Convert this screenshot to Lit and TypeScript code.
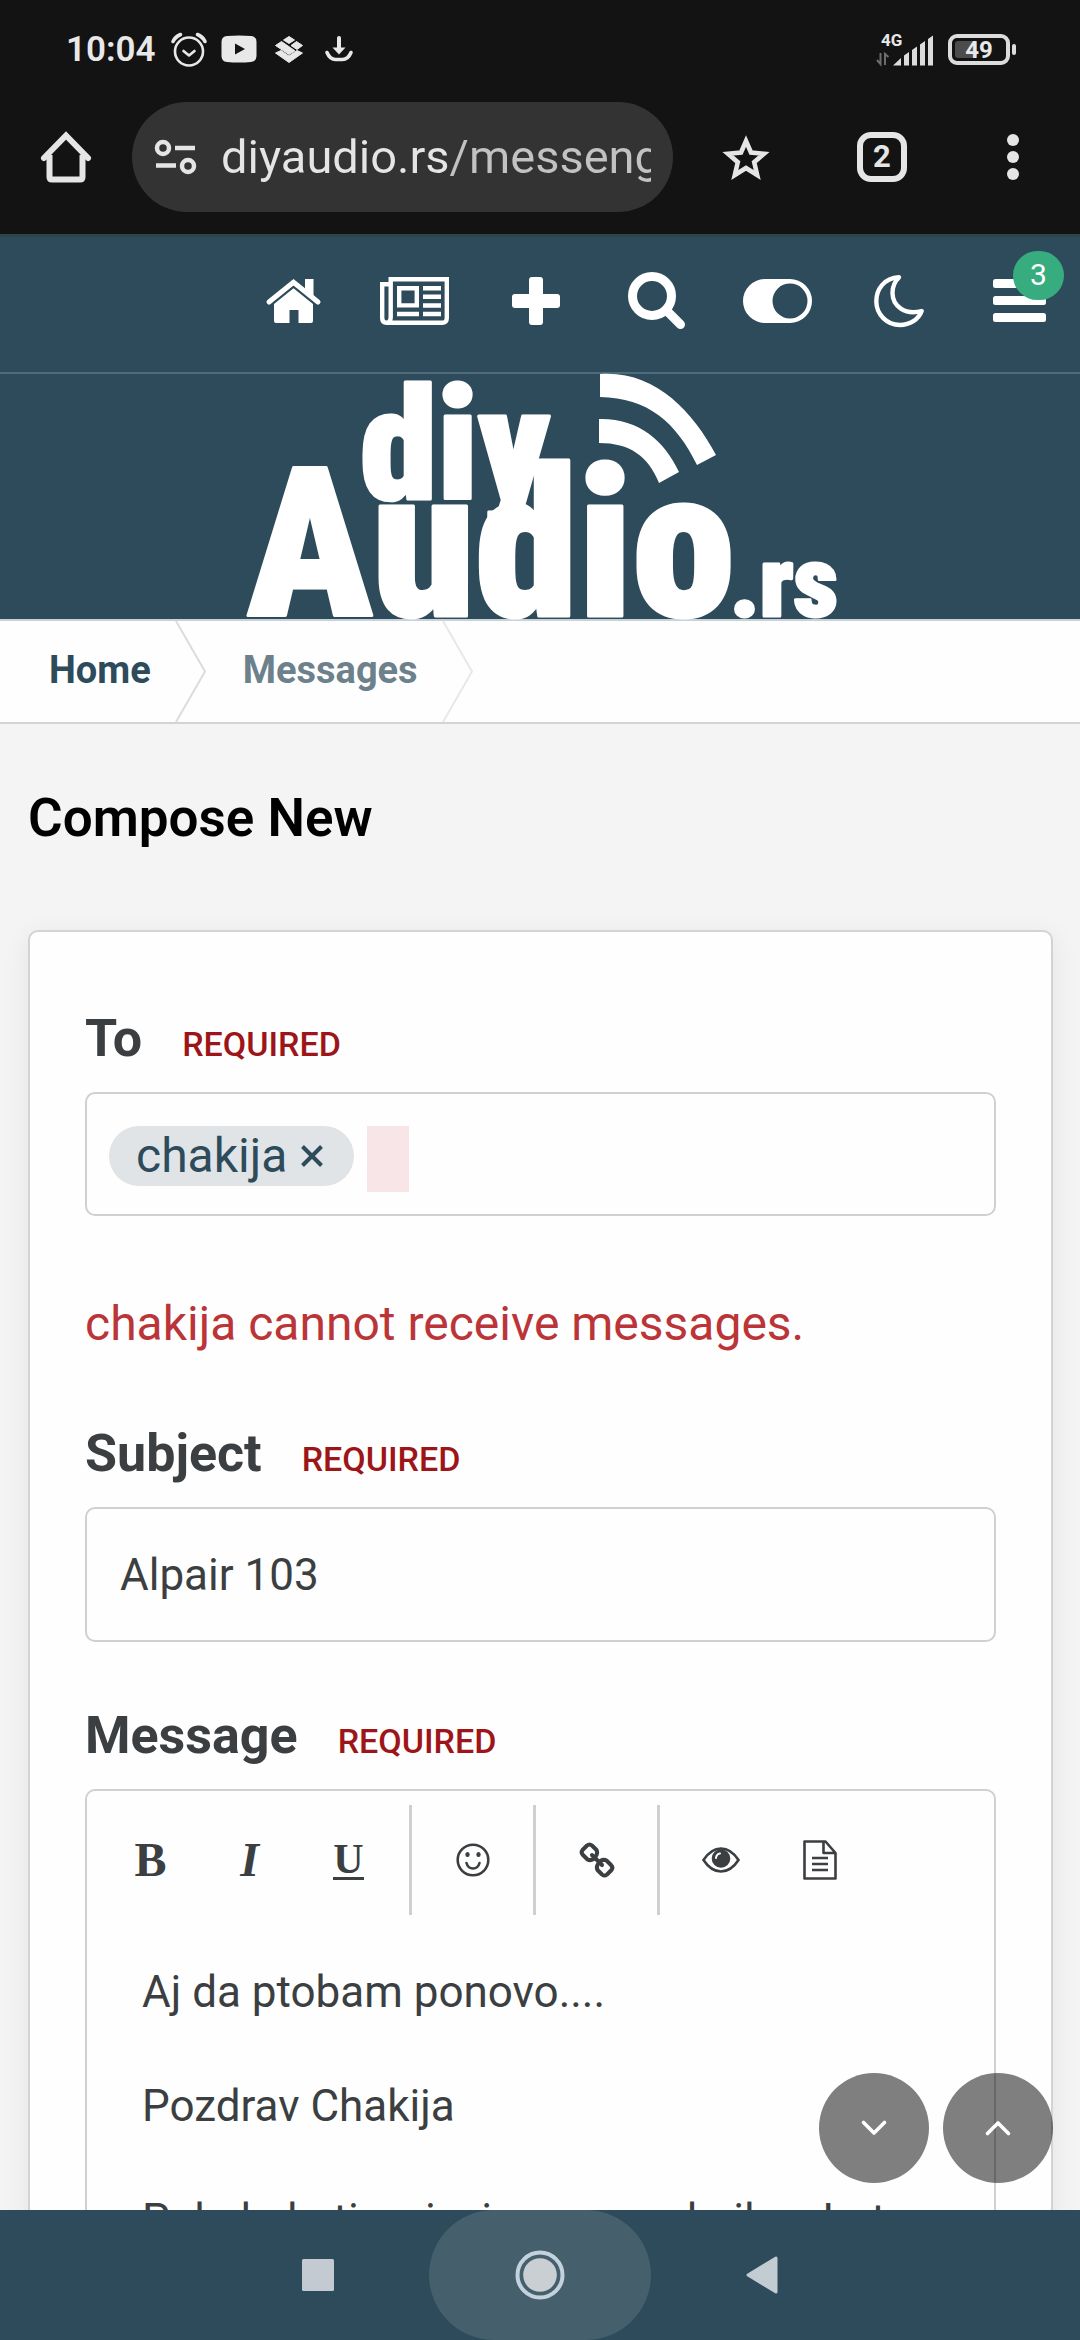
import { LitElement, html, svg, css } from "lit";
import { customElement, state } from "lit/decorators.js";

const reset = css`
  :host {
    display: block;
    font-family: Roboto, "Noto Sans", sans-serif;
  }
  * {
    box-sizing: border-box;
  }
  svg {
    display: block;
    flex: none;
    overflow: visible;
  }
  button {
    display: flex;
    align-items: center;
    justify-content: center;
    flex: none;
    margin: 0;
    padding: 0;
    border: 0;
    background: none;
    color: inherit;
    font: inherit;
  }
`;

/* ---------- Phone status bar ---------- */
@customElement("status-bar")
class StatusBar extends LitElement {
  static styles = [
    reset,
    css`
      .bar {
        display: flex;
        align-items: center;
        justify-content: space-between;
        height: 80px;
        padding: 20px 63px 0 66px;
        color: #e8e8e8;
        background: #131313;
      }
      .side {
        display: flex;
        align-items: center;
        gap: 14px;
      }
      .time {
        padding-right: 1px;
        font-size: 35px;
        font-weight: 600;
        line-height: 40px;
      }
      .net,
      .level {
        font-family: Roboto, sans-serif;
        font-weight: 700;
        fill: #e8e8e8;
      }
      .net {
        font-size: 17px;
      }
      .level {
        font-size: 24px;
      }
    `,
  ];
  render() {
    return html`
      <div class="bar">
        <div class="side">
          <span class="time">10:04</span>
          <svg width="36" height="36" viewBox="0 0 36 36" fill="none" stroke="#e8e8e8" stroke-width="2.6" stroke-linecap="round" stroke-linejoin="round">
            <circle cx="18" cy="19.5" r="14" />
            <path d="M12.5 19 L18 23.5 L23.5 19" />
            <path d="M2 9.5 Q4 5 9.500 2.500 M34 9.500 Q32 5 26.500 2.500" stroke-width="3.600" />
          </svg>
          <svg width="36" height="36" viewBox="0 0 36 36" fill="#e8e8e8">
            <path fill-rule="evenodd" d="M6 4 Q18 3 30 4 Q35.500 4.500 35.500 10 V24 Q35.500 29.500 30 30 Q18 31 6 30 Q.5 29.500 .5 24 V10 Q.5 4.500 6 4Z M14 11.500 V22.500 L24 17Z" />
          </svg>
          <svg width="36" height="36" viewBox="0 0 36 36" fill="#e8e8e8" stroke="#e8e8e8" stroke-width="1" stroke-linejoin="round">
            <path d="M18 4.500 L23.500 8 L18 11.500 L12.500 8Z" />
            <path d="M25.500 9.500 L31.500 13.500 L26 17.500 L20 13.500Z" />
            <path d="M10.500 9.500 L24 18.800 L18 22.500 L4.500 13.500Z" />
            <path d="M4.500 21 L10 18.500 L18 24 L26 18.500 L31.500 21 L18 30.500Z" />
          </svg>
          <svg width="36" height="36" viewBox="0 0 36 36" fill="none" stroke="#e8e8e8" stroke-linecap="round">
            <path d="M18 6 V16" stroke-width="4" />
            <path d="M11.500 15.500 H24.500 L18 22.500Z" fill="#e8e8e8" stroke="none" />
            <path d="M6 20.500 Q9 27.500 14.500 27.500 H21.500 Q27 27.500 30 20.500" stroke-width="3.600" />
          </svg>
        </div>
        <div class="side">
          <svg width="58" height="34" viewBox="0 0 58 34" fill="#dcdcdc">
            <text class="net" x="5" y="13">4G</text>
            <path d="M4.500 20 V31 L1 27 M9 32 V21 L12.500 24" fill="none" stroke="#6d6d6d" stroke-width="2" />
            <path d="M17 32.500 L25 25 V32.500Z M28 22.500 L33 19 V32.500 H28Z M36 17 L41 13.500 V32.500 H36Z M44 11.500 L49 8 V32.500 H44Z M52 6 L57 2.500 V32.500 H52Z" />
          </svg>
          <svg width="69" height="34" viewBox="0 0 69 34">
            <rect x="2" y="3" width="58" height="27" rx="7" fill="none" stroke="#dcdcdc" stroke-width="4" />
            <rect x="7" y="8" width="22" height="17" rx="3" fill="#4c4c4c" />
            <rect x="64" y="11" width="4" height="11" rx="2" fill="#dcdcdc" />
            <text class="level" x="31" y="25" text-anchor="middle">49</text>
          </svg>
        </div>
      </div>
    `;
  }
}

/* ---------- Browser toolbar ---------- */
@customElement("browser-bar")
class BrowserBar extends LitElement {
  static styles = [
    reset,
    css`
      .bar {
        display: flex;
        align-items: center;
        height: 154px;
        background: #131313;
        color: #e5e5e5;
      }
      .home {
        width: 132px;
      }
      .pill {
        display: flex;
        align-items: center;
        gap: 24px;
        flex: 1;
        min-width: 0;
        height: 110px;
        padding: 0 22px;
        border-radius: 55px;
        background: #333333;
      }
      .url {
        flex: 1;
        min-width: 0;
        height: 64px;
        padding: 0;
        border: 0;
        outline: 0;
        font: 400 47px/64px Roboto, sans-serif;
        color: transparent;
        background: linear-gradient(to right, #e5e5e5 229px, #c2c2c2 229px);
        -webkit-background-clip: text;
        background-clip: text;
      }
      .star {
        width: 145px;
      }
      .tabs {
        width: 128px;
      }
      .count {
        display: flex;
        align-items: center;
        justify-content: center;
        width: 50px;
        height: 50px;
        border: 6px solid #e5e5e5;
        border-radius: 14px;
        font-size: 31px;
        font-weight: 700;
        line-height: 36px;
      }
      .more {
        width: 134px;
      }
    `,
  ];
  render() {
    return html`
      <div class="bar">
        <button class="home" aria-label="Home page">
          <svg width="50" height="52" viewBox="0 0 50 52" fill="none" stroke="#e5e5e5" stroke-width="6" stroke-linejoin="round" stroke-linecap="round">
            <path d="M3 27 L25 4.500 L47 27" stroke-linejoin="miter" />
            <path d="M8.500 24 V46 Q8.500 48.500 11 48.500 H39 Q41.500 48.500 41.500 46 V24" stroke-linecap="butt" />
          </svg>
        </button>
        <div class="pill">
          <button aria-label="Site settings">
            <svg width="43" height="36" viewBox="0 0 43 36" fill="none" stroke="#e5e5e5" stroke-width="4.500">
              <circle cx="9" cy="9" r="6" />
              <circle cx="34" cy="27" r="6" />
              <path d="M21 9 H41 M2 26.500 H22" />
            </svg>
          </button>
          <input class="url" type="text" aria-label="Address" .value=${"diyaudio.rs/messenger"} />
        </div>
        <button class="star" aria-label="Bookmark">
          <svg width="50" height="50" viewBox="0 0 50 50" fill="none" stroke="#e5e5e5" stroke-width="4.600">
            <path d="M25 9 L30 20.500 L43 21.800 L33.200 30.200 L36.200 43 L25 36 L13.800 43 L16.800 30.200 L7 21.800 L20 20.500Z" />
          </svg>
        </button>
        <button class="tabs" aria-label="Tabs"><span class="count">2</span></button>
        <button class="more" aria-label="Menu">
          <svg width="12" height="46" viewBox="0 0 12 46" fill="#e5e5e5">
            <circle cx="6" cy="6" r="6" />
            <circle cx="6" cy="23" r="6" />
            <circle cx="6" cy="40" r="6" />
          </svg>
        </button>
      </div>
    `;
  }
}

/* ---------- Site header with icon navigation and wordmark ---------- */
const siteIcons = {
  home: svg`
    <path d="M3 23 L27.500 3.300 L52 23" fill="none" stroke="#fff" stroke-width="5" stroke-linecap="round" />
    <path d="M39 0 H47.500 V18 L39 11Z" />
    <path d="M8 25 L27.500 9.300 L47 25 V42 Q47 44 45 44 H32.500 V31 H23.500 V44 H10 Q8 44 8 42Z" />`,
  news: svg`
    <path fill="none" stroke="#fff" stroke-width="4.400" d="M10.700 41 V2.200 H66.800 V41 Q66.800 45.800 62 45.800 H6.500 Q2.200 45.800 2.200 41 V7.200 H10.700 M10.700 40 Q10.700 45 7 45.800 M19.200 11.200 H36.800 V28.400 H19.200Z M17 37 H39 M43 11.200 H61 M43 19.700 H61 M43 28.500 H61 M43 37 H61" />`,
  plus: svg`
    <rect x="17" y="0" width="14" height="48" rx="3" /><rect x="0" y="17" width="48" height="14" rx="3" />`,
  search: svg`
    <circle cx="24" cy="24" r="19.500" fill="none" stroke="#fff" stroke-width="9" />
    <path d="M39 39 L52.500 52.500" stroke="#fff" stroke-width="9" stroke-linecap="round" />`,
  toggle: svg`
    <path fill-rule="evenodd" d="M22 0 H47 A22 22 0 0 1 47 44 H22 A22 22 0 0 1 22 0Z M47 4.500 A17.500 17.500 0 0 0 47 39.500 A17.500 17.500 0 0 0 47 4.500Z" />`,
  moon: svg`
    <path fill="none" stroke="#fff" stroke-width="4.400" stroke-linejoin="round" d="M25 2.300 C10 3 2.300 14.500 2.300 26.300 C2.300 39.500 13 50 26 50 C36 50 44.500 44.500 47.700 36 C31 40.500 18.500 31 18.500 18 C18.500 11.500 21 6 25 2.300Z" />`,
  menu: svg`
    <rect width="53" height="9" rx="2.500" /><rect y="17" width="53" height="9" rx="2.500" /><rect y="34" width="53" height="9" rx="2.500" />`,
};

const siteNav = [
  { label: "Home", icon: siteIcons.home, w: 55, h: 44 },
  { label: "What's new", icon: siteIcons.news, w: 69, h: 48 },
  { label: "Post thread", icon: siteIcons.plus, w: 48, h: 48 },
  { label: "Search", icon: siteIcons.search, w: 57, h: 57 },
  { label: "Toggle width", icon: siteIcons.toggle, w: 69, h: 44 },
  { label: "Dark style", icon: siteIcons.moon, w: 50, h: 52 },
  { label: "Menu", icon: siteIcons.menu, w: 53, h: 44, badge: "3" },
];

@customElement("site-header")
class SiteHeader extends LitElement {
  static styles = [
    reset,
    css`
      .head {
        border-top: 3px solid #304549;
        background: #2d4b5b;
        color: #fff;
      }
      .nav {
        display: flex;
        justify-content: flex-end;
        height: 137px;
        padding-bottom: 8px;
        border-bottom: 2px solid #4f6c7c;
      }
      .item {
        position: relative;
        width: 121px;
      }
      .badge {
        position: absolute;
        top: 14px;
        right: 16px;
        min-width: 51px;
        height: 49px;
        border-radius: 25px;
        background: #37ac7f;
        font-size: 30px;
        line-height: 48px;
      }
      .logo {
        display: flex;
        justify-content: center;
      }
      .word {
        font-family: "Roboto Condensed", "Liberation Sans Narrow", Roboto, sans-serif;
        font-weight: 900;
        stroke: #fff;
        stroke-width: 3px;
        stroke-linejoin: round;
      }
      .big {
        font-size: 208px;
      }
      .mid {
        font-size: 156px;
      }
      .small {
        font-size: 98px;
      }
    `,
  ];
  render() {
    return html`
      <header class="head">
        <nav class="nav">
          ${siteNav.map(
            (n) => html`<button class="item" aria-label=${n.label}>
              <svg width=${n.w} height=${n.h} viewBox="0 0 ${n.w} ${n.h}" fill="#fff">${n.icon}</svg>
              ${n.badge ? html`<span class="badge">${n.badge}</span>` : ""}
            </button>`
          )}
        </nav>
        <div class="logo">
          <svg width="588" height="245" viewBox="0 0 588 245" fill="#fff" role="img" aria-label="diyAudio.rs">
            <text class="word mid" x="114" y="125">diy</text>
            <text class="word big" x="1" y="242">Audio</text>
            <text class="word small" x="484" y="242">.rs</text>
            <path d="M354 0 C408 -4 446 36 470 81 L451 91 C430 48 402 24 354 23Z" />
            <path d="M353 45 C392 44 418 66 433 98 L413 109 C402 82 384 69 353 69Z" />
          </svg>
        </div>
      </header>
    `;
  }
}

/* ---------- Breadcrumb ---------- */
@customElement("bread-crumbs")
class BreadCrumbs extends LitElement {
  static styles = [
    reset,
    css`
      .trail {
        display: flex;
        align-items: center;
        height: 105px;
        padding-left: 49px;
        border-top: 2px solid #c9d2d8;
        border-bottom: 2px solid #d3d3d3;
        background: #fefefe;
        font-size: 38px;
        font-weight: 700;
      }
      .crumb {
        display: flex;
        align-items: center;
        gap: 24px;
        padding-right: 36px;
      }
      .link {
        color: #2d4b5b;
        text-decoration: none;
        line-height: 44px;
        padding-bottom: 4px;
      }
      .faded {
        color: #6c818b;
      }
    `,
  ];
  private chevron(color: string) {
    return html`<svg width="32" height="101" viewBox="0 0 32 101" fill="none" stroke=${color} stroke-width="2">
      <path d="M1 0 L30 50.500 L1 101" />
    </svg>`;
  }
  render() {
    return html`
      <nav class="trail" aria-label="Breadcrumb">
        <span class="crumb"><a class="link" href="#home">Home</a>${this.chevron("#dcdcdc")}</span>
        <span class="crumb"><a class="link faded" href="#messages">Messages</a>${this.chevron("#e8e8e8")}</span>
      </nav>
    `;
  }
}

/* ---------- Compose form ---------- */
@customElement("compose-form")
class ComposeForm extends LitElement {
  @state() private subject = "Alpair 103";
  @state() private body =
    "Aj da ptobam ponovo....\n\nPozdrav Chakija\n\nPokakukati ve isci moracun kail se Lot";

  static styles = [
    reset,
    css`
      .card {
        display: flex;
        flex-direction: column;
        margin: 0 27px 27px 28px;
        padding: 77px 55px;
        border: 2px solid #d3d3d3;
        border-radius: 10px;
        background: #fefefe;
        box-shadow: 0 6px 28px rgba(0, 0, 0, 0.07);
        color: #3b3f41;
      }
      .caption {
        display: flex;
        align-items: baseline;
        gap: 40px;
        height: 60px;
        margin-bottom: 23px;
        line-height: 60px;
      }
      .name {
        font-size: 52px;
        font-weight: 700;
      }
      .must {
        font-size: 34px;
        font-weight: 500;
        color: #9d1518;
      }
      .box {
        border: 2px solid #d0d0d0;
        border-radius: 10px;
        background: #fefefe;
      }
      .people {
        display: flex;
        align-items: flex-start;
        gap: 13px;
        height: 124px;
        padding: 32px 22px;
      }
      .chip {
        display: flex;
        align-items: center;
        gap: 14px;
        height: 60px;
        padding: 0 31px 0 27px;
        border-radius: 30px;
        background: #e0e4e7;
        color: #2d4b5b;
        font-size: 48px;
        line-height: 60px;
      }
      .more {
        width: 42px;
        height: 66px;
        padding: 0;
        border: 0;
        outline: 0;
        background: #f8e5e8;
        font: inherit;
      }
      .error {
        margin: 80px 0 72px;
        font-size: 48px;
        line-height: 56px;
        color: #bb3538;
      }
      .subject {
        width: 100%;
        height: 135px;
        margin-bottom: 64px;
        padding: 0 33px;
        outline: 0;
        color: inherit;
        font: 400 44px/60px Roboto, sans-serif;
      }
      .tools {
        display: flex;
        padding: 14px 14px 0;
      }
      .group {
        display: flex;
        padding-right: 11px;
        margin-right: 11px;
        border-right: 3px solid #cfcfcf;
      }
      .group:last-child {
        border-right: 0;
      }
      .tool {
        width: 99px;
        height: 110px;
        font-family: "Liberation Serif", serif;
        font-size: 48px;
        font-weight: 700;
        line-height: 56px;
      }
      .italic {
        font-style: italic;
      }
      .under {
        border-bottom: 3px solid #3b3f41;
        line-height: 36px;
        font-size: 42px;
      }
      .text {
        display: block;
        width: 100%;
        padding: 49px 55px;
        border: 0;
        outline: 0;
        resize: none;
        overflow: hidden;
        background: transparent;
        color: inherit;
        font: 400 44px/57px Roboto, sans-serif;
      }
    `,
  ];

  render() {
    return html`
      <form class="card">
        <label class="caption" for="to"><span class="name">To</span><span class="must">REQUIRED</span></label>
        <div class="box people">
          <span class="chip">chakija
            <button type="button" aria-label="Remove chakija">
              <svg width="22" height="22" viewBox="0 0 22 22" stroke="#2d4b5b" stroke-width="4"><path d="M1.500 1.500 L20.500 20.500 M20.500 1.500 L1.500 20.500" /></svg>
            </button>
          </span>
          <input class="more" id="to" type="text" />
        </div>
        <p class="error" role="alert">chakija cannot receive messages.</p>

        <label class="caption" for="subject"><span class="name">Subject</span><span class="must">REQUIRED</span></label>
        <input
          class="box subject"
          id="subject"
          type="text"
          .value=${this.subject}
          @input=${(e: Event) => (this.subject = (e.target as HTMLInputElement).value)}
        />

        <label class="caption" for="message"><span class="name">Message</span><span class="must">REQUIRED</span></label>
        <div class="box">
          <div class="tools">
            <div class="group">
              <button type="button" class="tool" aria-label="Bold">B</button>
              <button type="button" class="tool italic" aria-label="Italic">I</button>
              <button type="button" class="tool" aria-label="Underline"><span class="under">U</span></button>
            </div>
            <div class="group">
              <button type="button" class="tool" aria-label="Smilies">
                <svg width="34" height="34" viewBox="0 0 34 34" fill="none" stroke="#3b3f41" stroke-width="2.600" stroke-linecap="round">
                  <circle cx="17" cy="17" r="15.300" />
                  <path d="M10.500 20 Q12 25.500 17 25.500 Q22 25.500 23.500 20" />
                  <ellipse cx="11.500" cy="11.500" rx="1.600" ry="2" fill="#3b3f41" stroke-width="1.200" />
                  <ellipse cx="22.500" cy="11.500" rx="1.600" ry="2" fill="#3b3f41" stroke-width="1.200" />
                </svg>
              </button>
            </div>
            <div class="group">
              <button type="button" class="tool" aria-label="Insert link">
                <svg width="36" height="36" viewBox="0 0 36 36" fill="none" stroke="#3b3f41" stroke-width="4" stroke-linejoin="round" stroke-linecap="round">
                  <path d="M8 3.500 Q10.500 1.500 13 3.500 L17.500 8 Q19 11 17 14 L14.500 17 Q11.500 19 8.500 17.500 L4 13 Q1.500 10.500 3.500 8Z" />
                  <path d="M21.500 19 Q24.500 17 27.500 18.500 L32 23 Q34.500 25.500 32.500 28 L28 32.500 Q25.500 34.500 23 32.500 L18.500 28 Q17 25 19 22Z" />
                  <path d="M13 13 L23 23" />
                </svg>
              </button>
            </div>
            <div class="group">
              <button type="button" class="tool" aria-label="Preview">
                <svg width="38" height="26" viewBox="0 0 38 26" fill="none" stroke="#3b3f41" stroke-width="2.600">
                  <path d="M1.500 13 Q9 1.500 19 1.500 Q29 1.500 36.500 13 Q29 24.500 19 24.500 Q9 24.500 1.500 13Z" />
                  <circle cx="19" cy="11.500" r="8" fill="#3b3f41" />
                  <path d="M14 11 Q14.500 7 18 6.500" stroke="#fefefe" stroke-width="2" stroke-linecap="round" />
                </svg>
              </button>
              <button type="button" class="tool" aria-label="Drafts">
                <svg width="34" height="40" viewBox="0 0 34 40" fill="none" stroke="#3b3f41" stroke-width="2.600" stroke-linejoin="round">
                  <path d="M1.500 1.500 H22.500 L32.500 13 V38.500 H1.500Z M20.500 1.500 V13 H32.500" />
                  <path d="M9 18 H25 M9 24 H25 M9 30 H25" />
                </svg>
              </button>
            </div>
          </div>
          <textarea
            class="text"
            id="message"
            rows="7"
            .value=${this.body}
            @input=${(e: Event) => (this.body = (e.target as HTMLTextAreaElement).value)}
          ></textarea>
        </div>
      </form>
    `;
  }
}

/* ---------- Phone navigation bar ---------- */
@customElement("system-nav")
class SystemNav extends LitElement {
  static styles = [
    reset,
    css`
      .bar {
        display: flex;
        justify-content: center;
        background: #2d4b5b;
      }
      .key {
        width: 222px;
        height: 130px;
        border-radius: 65px;
      }
      .pressed {
        background: #455f6c;
      }
    `,
  ];
  render() {
    return html`
      <div class="bar">
        <button class="key" aria-label="Recent apps">
          <svg width="32" height="32" viewBox="0 0 32 32"><rect width="32" height="32" rx="1.500" fill="#c3cad1" /></svg>
        </button>
        <button class="key pressed" aria-label="Home screen">
          <svg width="50" height="50" viewBox="0 0 50 50">
            <circle cx="25" cy="25" r="22.500" fill="none" stroke="#c3d3dd" stroke-width="4" />
            <circle cx="25" cy="25" r="16.800" fill="#c9cfd3" />
          </svg>
        </button>
        <button class="key" aria-label="Back">
          <svg width="32" height="38" viewBox="0 0 32 38">
            <path d="M2 19 L30 2 V36Z" fill="#c3cbd3" stroke="#c3cbd3" stroke-width="3" stroke-linejoin="round" />
          </svg>
        </button>
      </div>
    `;
  }
}

@customElement("app-root")
class AppRoot extends LitElement {
  static styles = [
    reset,
    css`
      .screen {
        display: flex;
        flex-direction: column;
        height: 100vh;
        overflow: hidden;
        background: #f4f4f4;
      }
      .page {
        position: relative;
        flex: 1;
        min-height: 0;
        overflow: hidden;
      }
      .title {
        margin: 0;
        padding: 62px 28px 80px;
        font-size: 53px;
        font-weight: 600;
        line-height: 64px;
        color: #000;
      }
      .jump {
        position: absolute;
        right: 27px;
        bottom: 27px;
        display: flex;
        gap: 14px;
      }
      .round {
        width: 110px;
        height: 110px;
        border-radius: 50%;
        background: rgba(0, 0, 0, 0.5);
      }
    `,
  ];
  render() {
    return html`
      <div class="screen">
        <status-bar></status-bar>
        <browser-bar></browser-bar>
        <div class="page">
          <site-header></site-header>
          <bread-crumbs></bread-crumbs>
          <main>
            <h1 class="title">Compose New</h1>
            <compose-form></compose-form>
          </main>
          <div class="jump">
            <button class="round" aria-label="Scroll to bottom">
              <svg width="26" height="16" viewBox="0 0 26 16" fill="none" stroke="#fff" stroke-width="3.600" stroke-linecap="round" stroke-linejoin="round"><path d="M2.500 2.500 L13 13 L23.500 2.500" /></svg>
            </button>
            <button class="round" aria-label="Scroll to top">
              <svg width="26" height="16" viewBox="0 0 26 16" fill="none" stroke="#fff" stroke-width="3.600" stroke-linecap="round" stroke-linejoin="round"><path d="M2.500 13.500 L13 3 L23.500 13.500" /></svg>
            </button>
          </div>
        </div>
        <system-nav></system-nav>
      </div>
    `;
  }
}
